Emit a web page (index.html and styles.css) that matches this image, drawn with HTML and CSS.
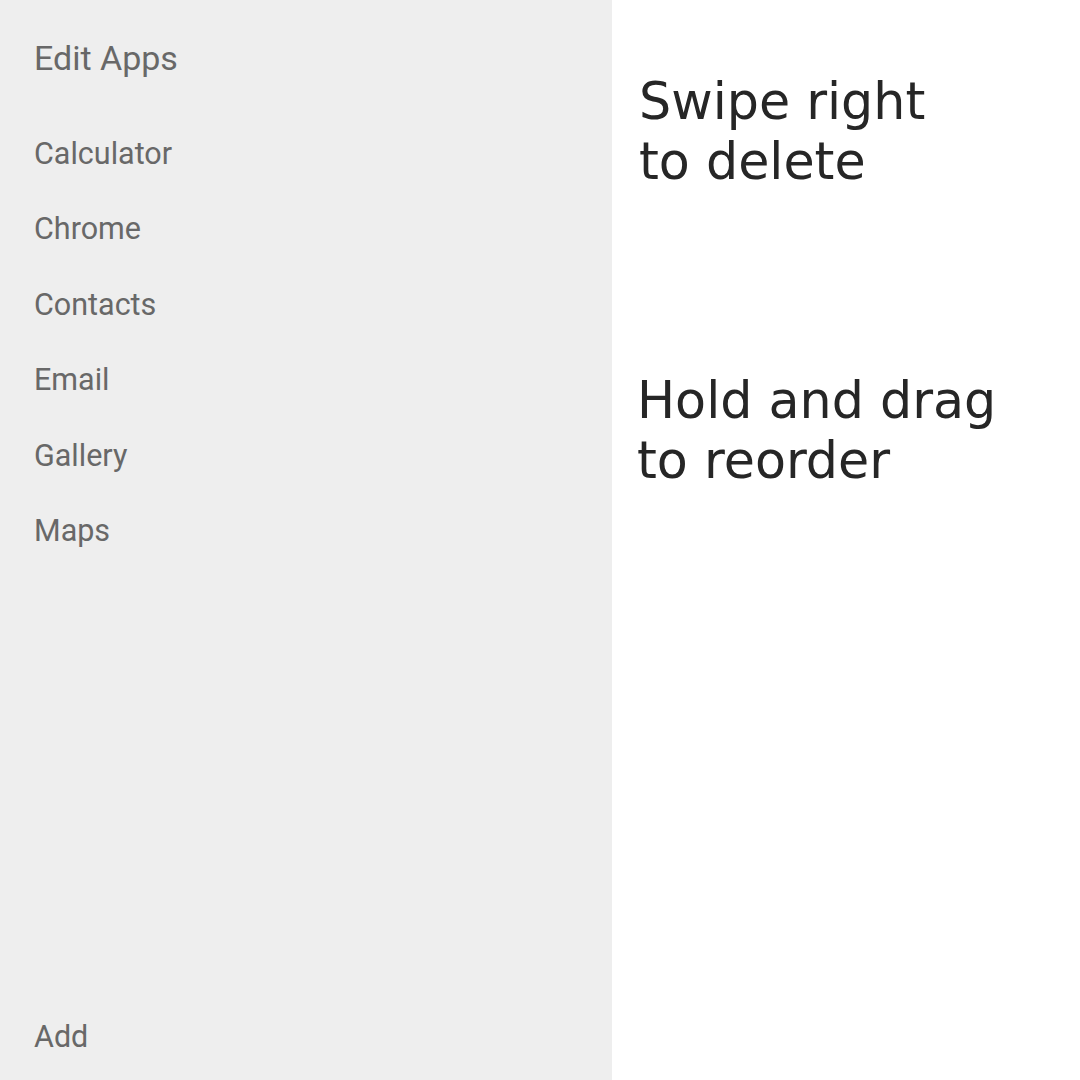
FILE: index.html
```html
<!DOCTYPE html>
<html>
<head>
<meta charset="utf-8">
<link rel="stylesheet" href="styles.css">
</head>
<body>
<div class="screen">
  <aside class="panel">
    <div class="title">Edit Apps</div>
    <ul class="apps">
      <li>Calculator</li>
      <li>Chrome</li>
      <li>Contacts</li>
      <li>Email</li>
      <li>Gallery</li>
      <li>Maps</li>
    </ul>
    <div class="add">Add</div>
  </aside>
  <main class="help">
    <p class="hint hint-swipe">Swipe right<br>to delete</p>
    <p class="hint hint-drag">Hold and drag<br>to reorder</p>
  </main>
</div>
</body>
</html>
```
FILE: styles.css
```css
html, body {
  margin: 0;
  padding: 0;
  width: 1080px;
  height: 1080px;
  background: #ffffff;
}
.screen {
  display: flex;
  width: 1080px;
  height: 1080px;
}
.panel {
  width: 612px;
  background: #eeeeee;
  display: flex;
  flex-direction: column;
  padding: 36px 0 0 34px;
  box-sizing: border-box;
  font-family: Roboto, "Liberation Sans", sans-serif;
  color: #686868;
}
.title {
  font-size: 34px;
  line-height: 44px;
}
.apps {
  list-style: none;
  margin: 36px 0 0;
  padding: 0;
}
.apps li {
  font-size: 30.5px;
  line-height: 75.4px;
}
.add {
  margin-top: auto;
  font-size: 30.5px;
  line-height: 40px;
  padding-bottom: 23px;
}
.help {
  flex: 1;
  padding: 72px 0 0 27px;
  font-family: "DejaVu Sans", sans-serif;
  color: #262626;
}
.hint {
  margin: 0;
  font-size: 50.7px;
  line-height: 60px;
}
.hint-drag {
  margin-top: 179px;
  margin-left: -2px;
}
```
